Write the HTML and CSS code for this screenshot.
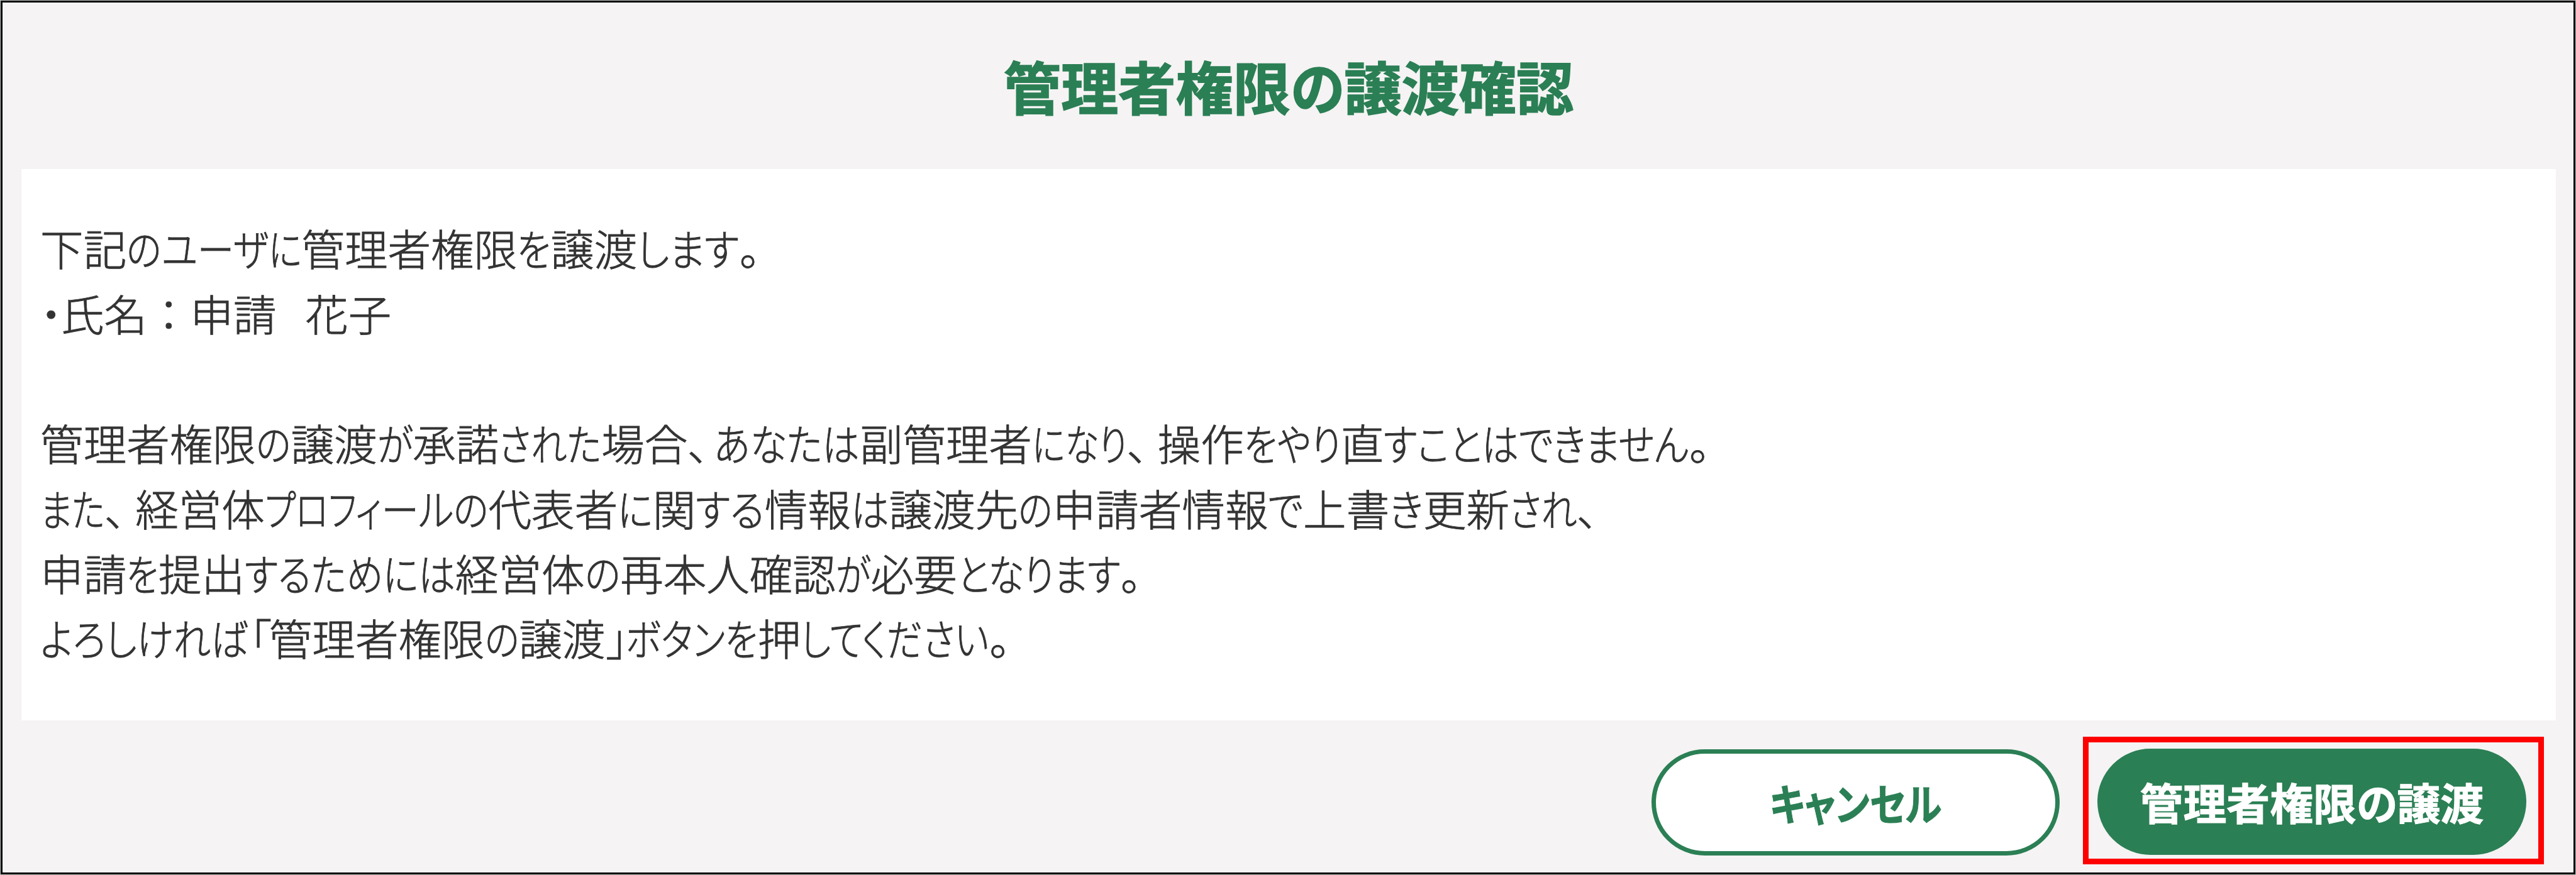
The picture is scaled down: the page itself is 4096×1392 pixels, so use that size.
FILE: index.html
```html
<!DOCTYPE html>
<html lang="ja">
<head>
<meta charset="utf-8">
<title>管理者権限の譲渡確認</title>
<link rel="stylesheet" href="styles.css">
</head>
<body>
<main class="dialog">
  <h1 class="title">管理者権限<span class="k" data-w="86">の</span>譲渡確認</h1>
  <section class="panel">
    <p class="line">下記<span class="k" data-w="56">の</span><span class="k" data-w="171">ユーザ</span><span class="k" data-w="53">に</span>管理者権限<span class="k" data-w="54">を</span>譲渡<span class="k" data-w="163">します</span><span class="p">。</span></p>
    <p class="line"><span class="p dot">・</span>氏名：申請<span class="p gap">　</span>花子</p>
    <p class="line"><br></p>
    <p class="line">管理者権限<span class="k" data-w="56">の</span>譲渡<span class="k" data-w="57">が</span>承諾<span class="k" data-w="164">された</span>場合<span class="p comma">、</span><span class="k" data-w="233">あなたは</span>副管理者<span class="k" data-w="152">になり</span><span class="p comma-wide">、</span>操作<span class="k" data-w="155">をやり</span>直<span class="k" data-w="488">すことはできません</span><span class="p">。</span></p>
    <p class="line"><span class="k" data-w="103">また</span><span class="p comma-wide">、</span>経営体<span class="k" data-w="187">プロフィ</span><span class="k" data-w="115">ール</span><span class="k" data-w="56">の</span>代表者<span class="k" data-w="56">に</span>関<span class="k" data-w="110">する</span>情報<span class="k" data-w="61">は</span>譲渡先<span class="k" data-w="55">の</span>申請者情報<span class="k" data-w="56">で</span>上書<span class="k" data-w="54">き</span>更新<span class="k" data-w="108">され</span><span class="p comma">、</span></p>
    <p class="line">申請<span class="k" data-w="51">を</span>提出<span class="k" data-w="337">するためには</span>経営体<span class="k" data-w="57">の</span>再本人確認<span class="k" data-w="56">が</span>必要<span class="k" data-w="261">となります</span><span class="p">。</span></p>
    <p class="line"><span class="k" data-w="332">よろしければ</span><span class="p open">「</span>管理者権限<span class="k" data-w="55">の</span>譲渡<span class="p close">」</span><span class="k" data-w="159">ボタン</span><span class="k" data-w="52">を</span>押<span class="k" data-w="301">してください</span><span class="p">。</span></p>
  </section>
  <footer class="actions">
    <button class="btn cancel" type="button"><span class="k" data-w="275">キャンセル</span></button>
    <div class="highlight">
      <button class="btn confirm" type="button">管理者権限<span class="k" data-w="65">の</span>譲渡</button>
    </div>
  </footer>
</main>
<script src="kana.js"></script>
</body>
</html>
```
FILE: styles.css
```css
* {
  box-sizing: border-box;
}

html {
  font-size: 99.37px;
}

body {
  margin: 0;
  width: 4096px;
  height: 1392px;
  padding: 1px;
  background: #c4c8c6;
  font-family: "Noto Sans CJK JP", sans-serif;
  overflow: hidden;
}

.dialog {
  height: 100%;
  display: flex;
  flex-direction: column;
  border: 3px solid #000;
  background: #f5f3f4;
  padding: 0 .28rem 0 .3rem;
}

.title {
  margin: 0;
  height: 2.67rem;
  padding-top: .62rem;
  text-align: center;
  font-size: .918rem;
  line-height: 1.4rem;
  font-weight: 700;
  color: #2b7f54;
  -webkit-text-stroke: 1.6px #2b7f54;
  white-space: nowrap;
}

.panel {
  height: 8.82rem;
  background: #fff;
  padding: .735rem .32rem 0 .305rem;
  color: #333;
  font-size: .69rem;
  font-weight: 300;
  -webkit-text-stroke: .9px #333;
}

.line {
  margin: 0;
  height: 1.04rem;
  line-height: 1.04rem;
  white-space: nowrap;
}

.k,
.p {
  display: inline-block;
  font-feature-settings: "palt";
  transform-origin: 0 50%;
}

.dot {
  width: .33rem;
  text-align: center;
}

.gap {
  width: .46rem;
}

.comma {
  width: .42rem;
}

.comma-wide {
  width: .49rem;
}

.open {
  width: .34rem;
  padding-left: .03rem;
}

.close {
  width: .33rem;
  padding-left: .02rem;
}

.actions {
  display: flex;
  justify-content: flex-end;
  align-items: flex-start;
  gap: .375rem;
  margin-top: .26rem;
  padding-right: .19rem;
}

.btn {
  display: flex;
  align-items: center;
  justify-content: center;
  height: 1.7rem;
  padding: 0;
  border: .08rem solid #2b7f54;
  border-radius: .85rem;
  font-family: inherit;
  font-size: .693rem;
  line-height: 1rem;
  font-weight: 700;
  white-space: nowrap;
}

.cancel {
  width: 6.53rem;
  margin-top: .205rem;
  background: #fff;
  color: #2b7f54;
  -webkit-text-stroke: 1px #2b7f54;
}

.confirm {
  width: 6.86rem;
  background: #2b7f54;
  color: #fff;
  -webkit-text-stroke: 1px #fff;
}

.highlight {
  width: 7.375rem;
  height: 2.05rem;
  border: .1rem solid #f00;
  padding: .105rem 0 0 .137rem;
}
```
FILE: kana.js
```javascript
// Condenses each kana run to its proportional width (in hundredths of a rem).
const rem = parseFloat(getComputedStyle(document.documentElement).fontSize);
document.querySelectorAll(".k").forEach((run) => {
  const natural = run.getBoundingClientRect().width;
  const target = (Number(run.dataset.w) * rem) / 100;
  run.style.transform = `scaleX(${target / natural})`;
  run.style.marginRight = `${target - natural}px`;
});
```
